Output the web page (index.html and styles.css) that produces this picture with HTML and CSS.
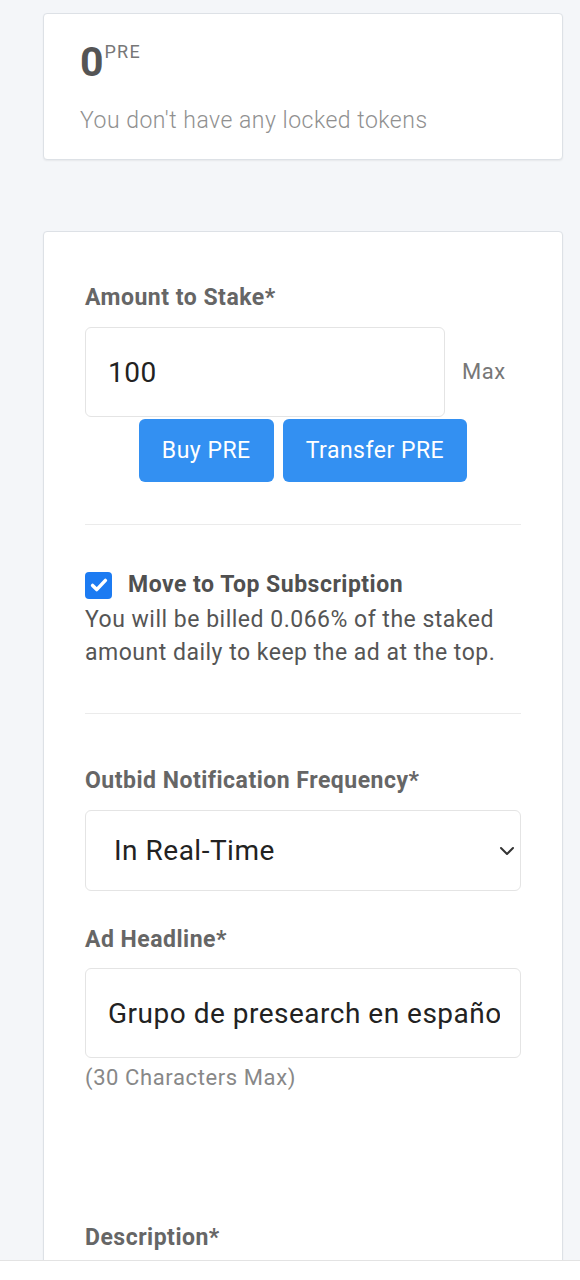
FILE: index.html
```html
<!DOCTYPE html>
<html lang="en">
<head>
<meta charset="utf-8">
<title>Stake</title>
<link rel="stylesheet" href="styles.css">
</head>
<body>
<div class="viewport">
  <main class="page">
    <section class="card locked">
      <div class="balance"><span class="amount">0</span><sup class="unit">PRE</sup></div>
      <p class="muted">You don't have any locked tokens</p>
    </section>

    <section class="card form">
      <label class="label" for="amt">Amount to Stake*</label>
      <div class="amount-row">
        <input id="amt" class="field amt" type="text" value="100">
        <span class="max">Max</span>
      </div>
      <div class="btn-row">
        <button class="btn">Buy PRE</button>
        <button class="btn">Transfer PRE</button>
      </div>

      <hr class="sep sep1">

      <div class="check-row">
        <span class="checkbox">
          <svg viewBox="0 0 24 24" width="22" height="22"><path d="M5 12.5l4.5 4.5L19 7" fill="none" stroke="#fff" stroke-width="3.8" stroke-linecap="round" stroke-linejoin="round"/></svg>
        </span>
        <span class="check-title">Move to Top Subscription</span>
      </div>
      <p class="desc">You will be billed 0.066% of the staked amount daily to keep the ad at the top.</p>

      <hr class="sep sep2">

      <label class="label" for="freq">Outbid Notification Frequency*</label>
      <div class="select-wrap">
        <select id="freq" class="field select"><option>In Real-Time</option></select>
        <svg class="chev" viewBox="0 0 16 10" width="16" height="10"><path d="M2 2l6 6 6-6" fill="none" stroke="#333" stroke-width="2" stroke-linecap="round" stroke-linejoin="round"/></svg>
      </div>

      <label class="label headline-label" for="head">Ad Headline*</label>
      <input id="head" class="field headline" type="text" value="Grupo de presearch en español">
      <p class="hint">(30 Characters Max)</p>

      <label class="label desc-label">Description*</label>
    </section>
  </main>
</div>
<footer class="bottom"></footer>
</body>
</html>
```

FILE: styles.css
```css
* { box-sizing: border-box; }
html, body { margin: 0; padding: 0; }
body {
  width: 580px;
  height: 1280px;
  background: #f4f6f9;
  font-family: Roboto, "Noto Sans", "Liberation Sans", sans-serif;
  overflow: hidden;
}
.viewport {
  height: 1260px;
  overflow: hidden;
}
.page {
  padding: 13px 17px 0 43px;
  display: flex;
  flex-direction: column;
  gap: 71px;
}
.card {
  background: #fff;
  border: 1px solid #dde1e6;
  border-radius: 4px;
  box-shadow: 0 1px 2px rgba(0,0,0,0.06);
}
.locked {
  height: 147px;
  padding: 24px 36px 0 36px;
}
.balance {
  line-height: 48px;
  height: 48px;
  display: flex;
  align-items: flex-start;
}
.amount {
  font-size: 41px;
  font-weight: 700;
  color: #555;
  line-height: 48px;
  letter-spacing: 1px;
}
.unit {
  font-size: 18px;
  letter-spacing: 1.2px;
  color: #777;
  line-height: 20px;
  margin-top: 4px;
  margin-left: 0;
  vertical-align: baseline;
}
.muted {
  margin: 20px 0 0 0;
  font-size: 23px;
  letter-spacing: 0.5px;
  line-height: 30px;
  font-weight: 300;
  color: #909090;
}
.form {
  padding: 52px 41px 200px 41px;
  display: flex;
  flex-direction: column;
  min-height: 1200px;
}
.label {
  display: block;
  font-size: 23px;
  letter-spacing: 0.5px;
  line-height: 28px;
  font-weight: 700;
  color: #666;
}
.amount-row {
  margin-top: 15px;
  display: flex;
  align-items: center;
  gap: 17px;
}
.field {
  border: 1px solid #e4e4e4;
  border-radius: 6px;
  background: #fff;
  font-family: Roboto, "Noto Sans", "Liberation Sans", sans-serif;
  color: #222;
  outline: none;
  margin: 0;
}
.amt {
  width: 360px;
  height: 90px;
  padding: 0 22px;
  font-size: 28px;
  letter-spacing: 0.5px;
}
.max {
  font-size: 22px;
  letter-spacing: 0.5px;
  color: #777;
  padding-bottom: 1px;
}
.btn-row {
  margin-top: 2px;
  display: flex;
  justify-content: center;
  gap: 9px;
}
.btn {
  height: 63px;
  padding: 0 23px;
  background: #3390f2;
  border: none;
  border-radius: 6px;
  color: #fff;
  font-family: Roboto, "Noto Sans", "Liberation Sans", sans-serif;
  font-size: 23px;
  letter-spacing: 0.5px;
}
.sep {
  border: none;
  border-top: 1px solid #ebebeb;
  margin: 0;
  width: 100%;
}
.sep1 { margin-top: 42px; }
.check-row {
  margin-top: 46px;
  display: flex;
  align-items: center;
  gap: 16px;
}
.checkbox {
  width: 27px;
  height: 27px;
  border-radius: 4px;
  background: #1c7bf2;
  display: flex;
  align-items: center;
  justify-content: center;
  flex: none;
}
.check-title {
  font-size: 23px;
  letter-spacing: 0.5px;
  line-height: 28px;
  font-weight: 700;
  color: #505050;
}
.desc {
  margin: 4px 0 0 0;
  font-size: 23px;
  letter-spacing: 0.5px;
  line-height: 33px;
  color: #555;
}
.sep2 { margin-top: 44px; margin-bottom: 53px; }
.select-wrap {
  margin-top: 15px;
  position: relative;
}
.select {
  display: block;
  width: 100%;
  height: 81px;
  padding: 0 28px;
  font-size: 28px;
  letter-spacing: 0.5px;
  appearance: none;
  -webkit-appearance: none;
}
.chev {
  position: absolute;
  right: 6px;
  top: 36px;
}
.headline-label { margin-top: 35px; }
.headline {
  margin-top: 14px;
  width: 100%;
  height: 90px;
  padding: 0 20px 0 22px;
  font-size: 28px;
  letter-spacing: 0.5px;
}
.hint {
  margin: 7px 0 0 0;
  font-size: 22px;
  letter-spacing: 0.6px;
  line-height: 26px;
  color: #888;
}
.desc-label { margin-top: 133px; }
.bottom {
  height: 20px;
  background: #fff;
  border-top: 1px solid #e3e3e3;
}
```
